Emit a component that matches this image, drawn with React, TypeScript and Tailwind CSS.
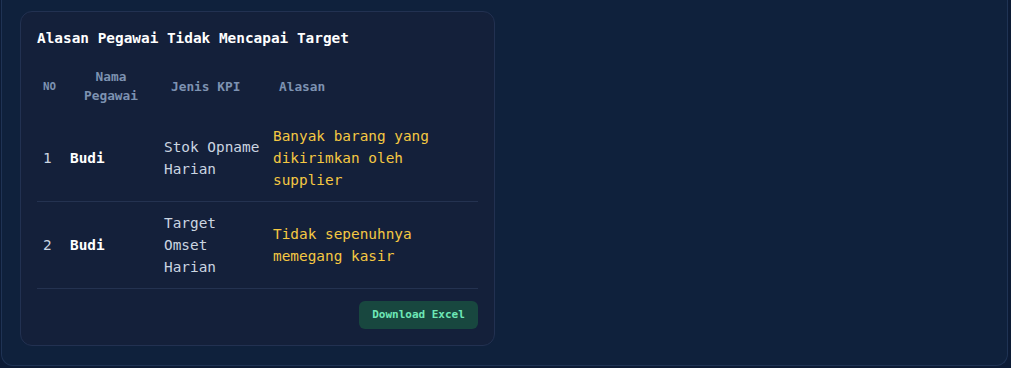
const rows = [
  { no: 1, nama: "Budi", kpi: "Stok Opname Harian", alasan: "Banyak barang yang dikirimkan oleh supplier" },
  { no: 2, nama: "Budi", kpi: "Target Omset Harian", alasan: "Tidak sepenuhnya memegang kasir" },
]

export default function App() {
  return (
    <div className="w-[1011px] h-[368px] bg-[#0c1b35] font-['DejaVu_Sans_Mono',monospace]">
      <div className="ml-[1px] w-[1007px] h-[366px] bg-[#0f213c] border border-t-0 border-[#1f3354] rounded-b-xl pl-[18px] pt-[11px]">
        <div className="w-[475px] bg-[#14203a] border border-[#223151] rounded-xl p-4">
          <h2 className="text-[14.4px] leading-5 font-bold text-white mb-[9px]">
            Alasan Pegawai Tidak Mencapai Target
          </h2>

          <table className="w-[441px] table-fixed border-collapse">
            <colgroup>
              <col className="w-[27px]" />
              <col className="w-[94px]" />
              <col className="w-[109px]" />
              <col className="w-[211px]" />
            </colgroup>
            <thead>
              <tr className="text-[#7d92b1] font-bold text-[12.8px] leading-[19px]">
                <th className="px-1.5 py-2.5 text-left text-[10.8px] align-middle">NO</th>
                <th className="px-1.5 py-2.5 text-center align-middle">Nama Pegawai</th>
                <th className="pl-[13px] pr-1.5 py-2.5 text-left align-middle">Jenis KPI</th>
                <th className="pl-3 pr-1.5 py-2.5 text-left align-middle">Alasan</th>
              </tr>
            </thead>
            <tbody>
              {rows.map((r) => (
                <tr key={r.no} className="border-b border-[#243250] text-[14.4px] leading-[22px]">
                  <td className="px-1.5 py-2.5 text-[#cbd5e1] align-middle">{r.no}</td>
                  <td className="px-1.5 py-2.5 font-bold text-white align-middle">{r.nama}</td>
                  <td className="px-1.5 py-2.5 text-[#cbd5e1] align-middle">{r.kpi}</td>
                  <td className="px-1.5 py-2.5 text-[#f5c842] align-middle">{r.alasan}</td>
                </tr>
              ))}
            </tbody>
          </table>

          <div className="flex justify-end mt-3 w-[441px]">
            <button className="h-7 w-[119px] rounded-md bg-[#18473f] text-[#6ee7b7] text-[11px] font-bold">
              Download Excel
            </button>
          </div>
        </div>
      </div>
    </div>
  )
}
